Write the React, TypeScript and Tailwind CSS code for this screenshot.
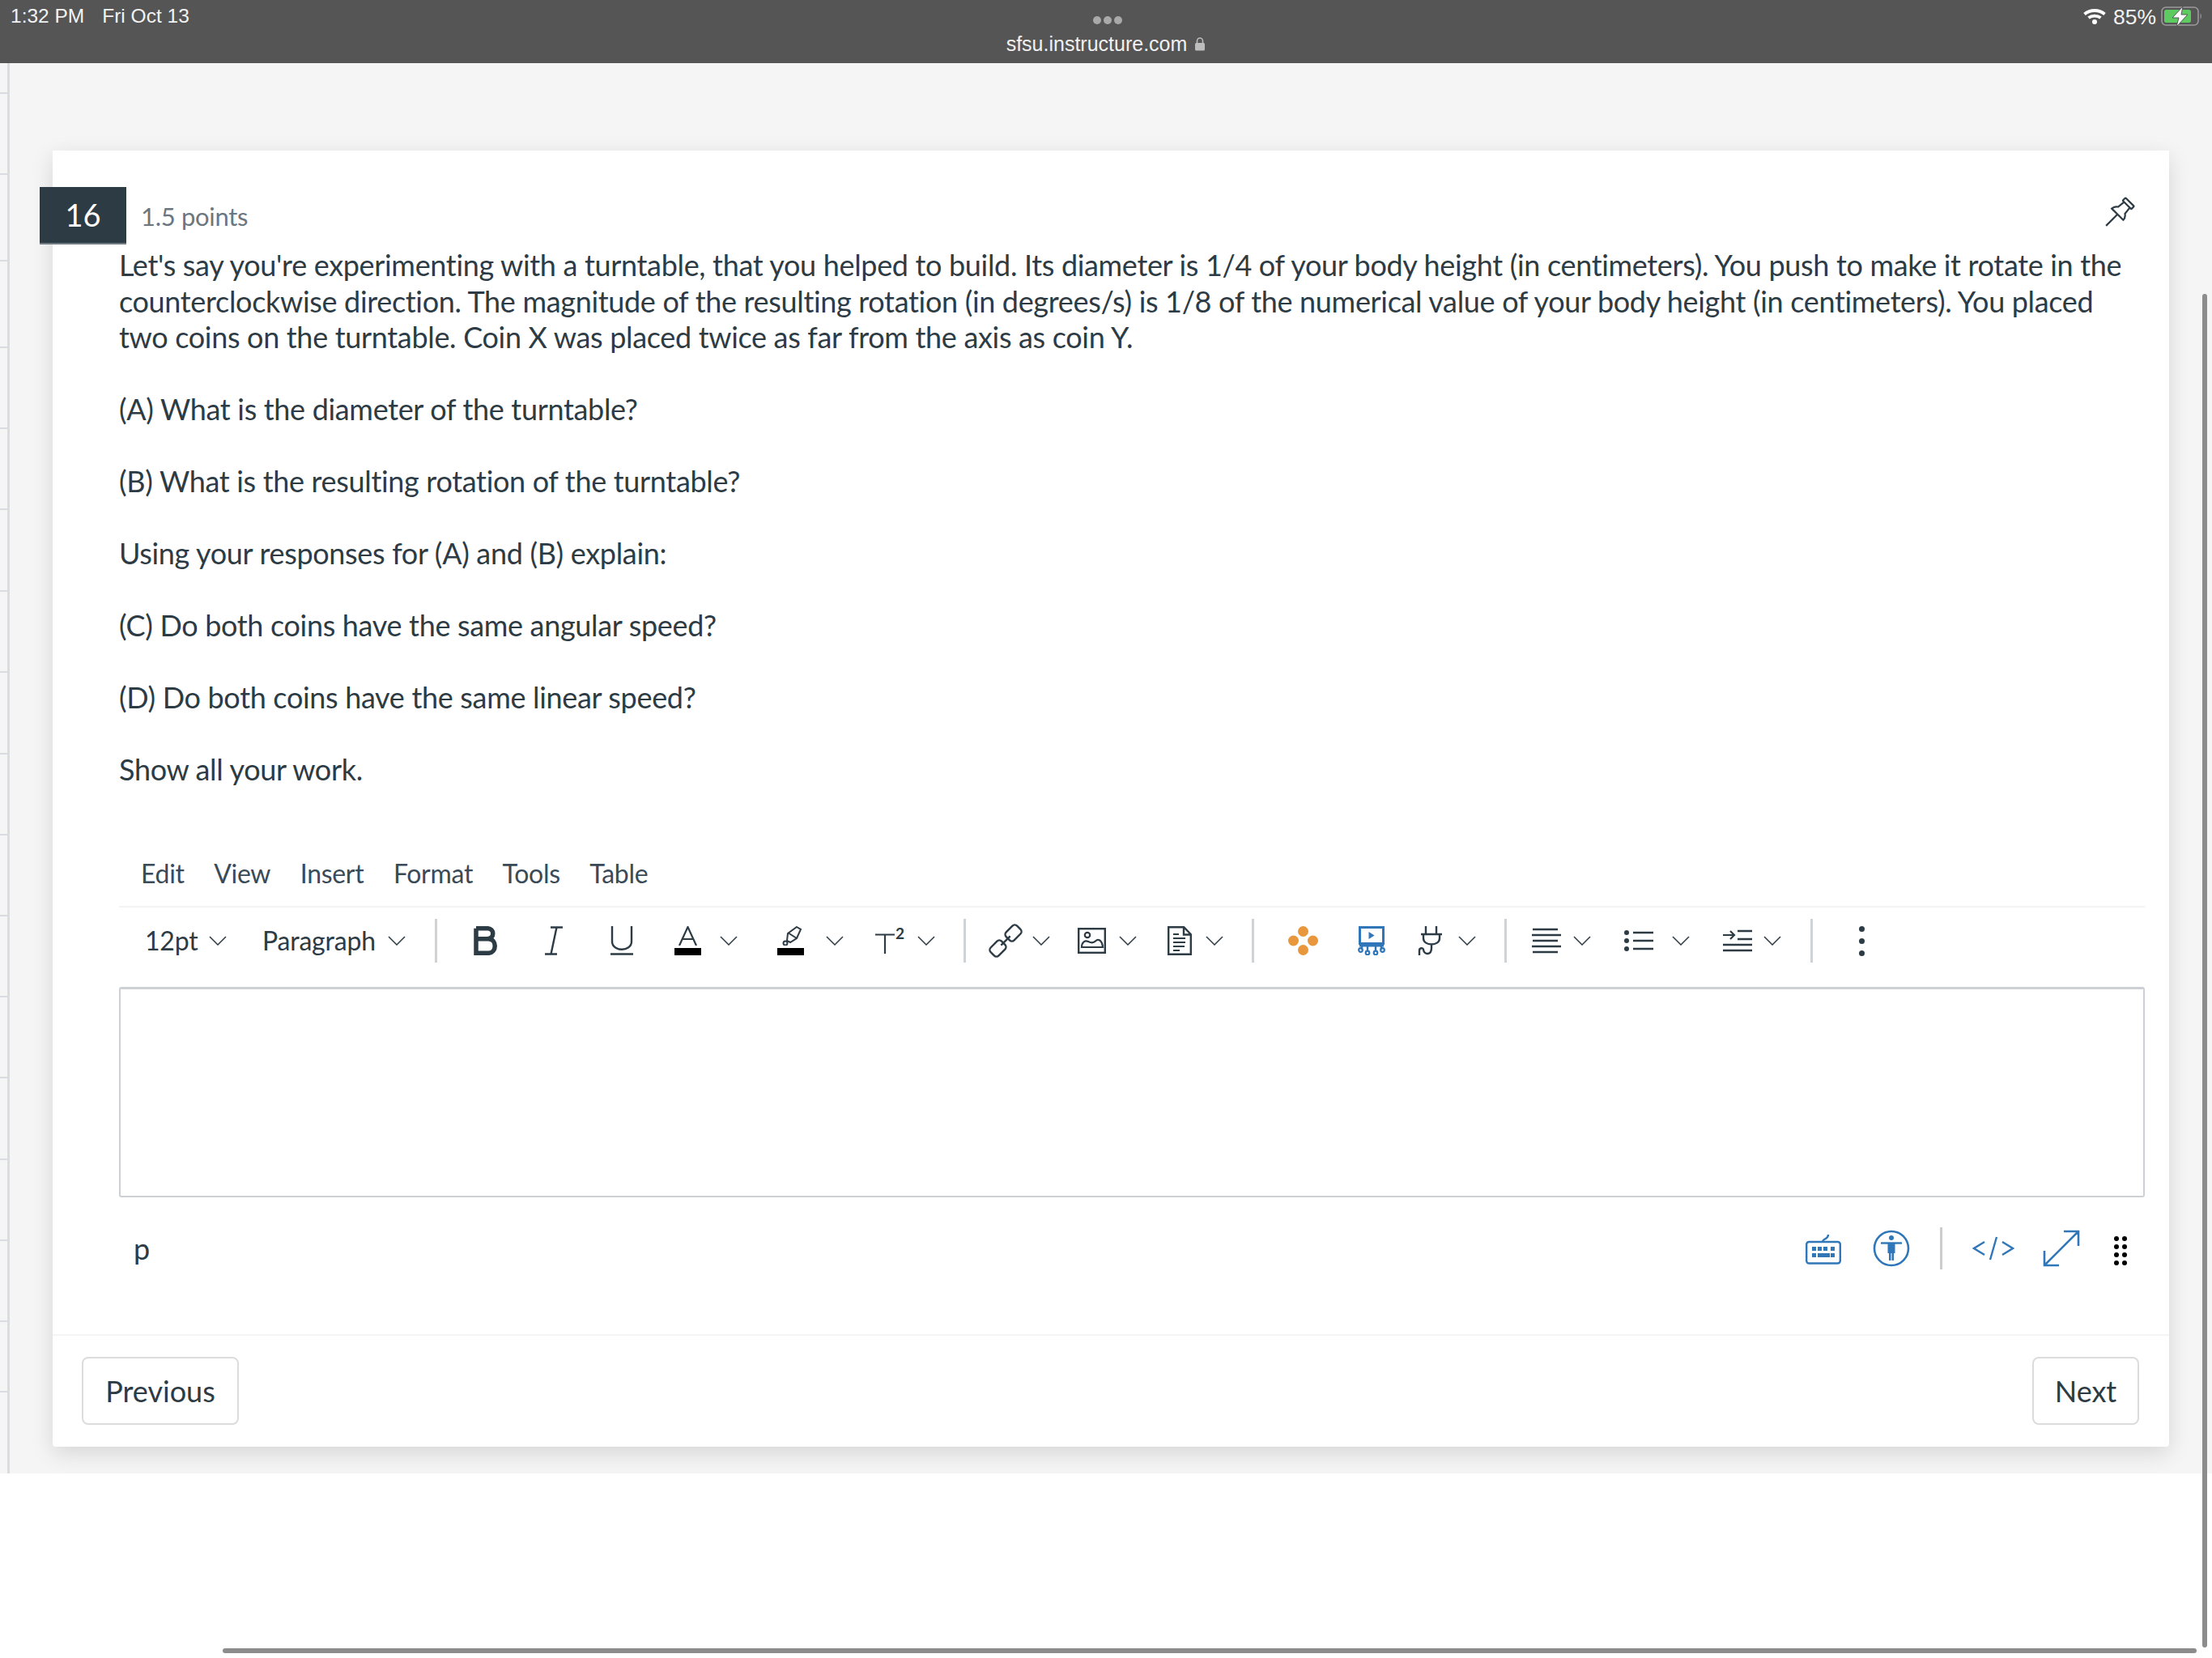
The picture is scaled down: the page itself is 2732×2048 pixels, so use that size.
const ticks = [38, 100, 107, 107, 100, 100, 101, 100, 101, 100, 100, 100, 100, 101, 100, 100, 87];

const Chevron = ({ className = '' }: { className?: string }) => (
  <svg viewBox="0 0 22 12" fill="none" stroke="#2d3b45" strokeWidth="1.5" className={`w-[22px] h-[12px] shrink-0 ${className}`}>
    <path d="M1 1l10 10L21 1" />
  </svg>
);

const Sep = ({ className = '' }: { className?: string }) => (
  <div className={`w-[3px] h-[54px] bg-[#cfd3d6] shrink-0 ${className}`} />
);

const paragraphs = [
  '(A) What is the diameter of the turntable?',
  '(B) What is the resulting rotation of the turntable?',
  'Using your responses for (A) and (B) explain:',
  '(C) Do both coins have the same angular speed?',
  '(D) Do both coins have the same linear speed?',
  'Show all your work.',
];

export default function App() {
  return (
    <div className="relative w-[2732px] h-[2048px] overflow-hidden bg-white text-[#2d3b45] font-['Lato','Liberation_Sans',sans-serif]">
      {/* ios status bar */}
      <div className="relative h-[78px] bg-[#555555] text-[#f2f2f2] font-['Liberation_Sans',sans-serif] flex justify-between">
        <div className="flex gap-[22px] pl-[13px] pt-[5px] text-[24.5px] leading-[30px]">
          <span>1:32 PM</span>
          <span>Fri Oct 13</span>
        </div>
        <div className="absolute left-0 right-0 top-[20px] flex flex-col items-center">
          <div className="flex gap-[3px] pl-[3px]">
            <span className="w-[10px] h-[10px] rounded-full bg-[#a9a9a9]" />
            <span className="w-[10px] h-[10px] rounded-full bg-[#a9a9a9]" />
            <span className="w-[10px] h-[10px] rounded-full bg-[#a9a9a9]" />
          </div>
          <div className="flex items-center gap-[9px] mt-[9px] text-[25px] leading-[30px] text-[#f0f0f0]">
            <span>sfsu.instructure.com</span>
            <svg viewBox="0 0 14 18" className="w-[14px] h-[19px]">
              <path d="M3.5 8V5a3.5 3.5 0 017 0v3" fill="none" stroke="#bdbdbd" strokeWidth="1.6" />
              <rect x="1" y="7.5" width="12" height="9.5" rx="1.5" fill="#bdbdbd" />
            </svg>
          </div>
        </div>
        <div className="flex items-start pt-[8px] pr-[11px]">
          <svg viewBox="0 0 28 20" className="w-[28px] h-[20px] mt-[2px]" fill="none" stroke="#fff" strokeWidth="3.8">
            <path d="M1.5 7.5c7-6 18-6 25 0" />
            <path d="M6.5 12c4-3.2 11-3.2 15 0" />
            <circle cx="14" cy="17" r="3" fill="#fff" stroke="none" />
          </svg>
          <span className="ml-[9px] text-[26.5px] leading-[30px] -mt-[2px]">85%</span>
          <svg viewBox="0 0 52 26" className="w-[52px] h-[26px] ml-[6px]">
            <rect x="1" y="1" width="45" height="22" rx="5" fill="none" stroke="#9a9a9a" strokeWidth="1.6" />
            <rect x="4" y="4" width="33" height="16" rx="2.500" fill="#5ecb61" />
            <path d="M48.500 8.500c2 1 2 6 0 7z" fill="#8f8f8f" />
            <path d="M27 0L14 14h8l-3 11 14-15h-8z" fill="#fff" stroke="#555555" strokeWidth="1" />
          </svg>
        </div>
      </div>

      {/* page area */}
      <div className="relative h-[1742px] bg-[#f5f5f5] flex">
        <div className="w-[12px] border-r-[3px] border-[#d9dde1] shrink-0">
          {ticks.map((h, i) => (
            <div key={i} style={{ height: h }} className="border-b-[2px] border-[#d9dde1]" />
          ))}
        </div>

        <div className="relative w-[2614px] h-[1601px] ml-[53px] mt-[108px] bg-white rounded-b-[4px] shadow-[0_8px_28px_rgba(0,0,0,0.13)] flex flex-col">
          <div className="absolute left-[-16px] top-[45px] w-[107px] h-[71px] bg-[#2d3b45] border-b-[2px] border-[#6f7a82] text-white text-[38px] leading-[69px] text-center">
            16
          </div>

          <div className="flex justify-between pl-[109px] pr-[46px] pt-[56px] h-[119px]">
            <span className="text-[31px] tracking-[-0.3px] leading-[50px] text-[#6b7780]">1.5 points</span>
            <svg viewBox="0 0 34 34" fill="none" stroke="#2d3b45" strokeWidth="2.2" className="w-[34px] h-[34px] mt-[5px] overflow-visible">
              <g transform="rotate(45 17 17)">
                <rect x="9.500" y="-3.500" width="15" height="5" rx="1" />
                <path d="M12 2l-1 9c-3 2-4 4-4 7h20c0-3-1-5-4-7l-1-9" />
                <path d="M17 18v20" />
              </g>
            </svg>
          </div>

          <div className="pl-[82px] pr-[30px] text-[36px] tracking-[-0.33px] leading-[44.5px] text-[#2d3b45]">
            <p>
              Let's say you're experimenting with a turntable, that you helped to build. Its diameter is 1/4 of your body height (in centimeters). You push to make it rotate in the counterclockwise direction. The magnitude of the resulting rotation (in degrees/s) is 1/8 of the numerical value of your body height (in centimeters). You placed two coins on the turntable. Coin X was placed twice as far from the axis as coin Y.
            </p>
            {paragraphs.map((t) => (
              <p key={t} className="mt-[44.5px]">{t}</p>
            ))}
          </div>

          {/* editor */}
          <div className="ml-[82px] mr-[30px] mt-[82px]">
            <div className="flex gap-[36.5px] pl-[27px] h-[66px] pb-[16px] items-center text-[32px] tracking-[-0.3px] text-[#394b58] border-b-[2px] border-[#f2f3f4]">
              <span>Edit</span>
              <span>View</span>
              <span>Insert</span>
              <span>Format</span>
              <span>Tools</span>
              <span>Table</span>
            </div>

            <div className="flex items-center h-[98px] pb-[15px] text-[32px] tracking-[-0.2px] text-[#2d3b45]">
              <span className="ml-[32px] w-[64px] shrink-0">12pt</span>
              <Chevron className="ml-[15px]" />
              <span className="ml-[44px] w-[139px] shrink-0">Paragraph</span>
              <Chevron className="ml-[16px]" />
              <Sep className="ml-[36px]" />

              <svg viewBox="0 0 30 36" className="w-[30px] h-[36px] ml-[45px] shrink-0" fill="none" stroke="#2d3b45" strokeWidth="5.500">
                <path d="M3 2.700h14c9 0 9 13 0 13H3M3 15.700h15c11 0 11 17.600 0 17.600H3V2.700" />
              </svg>
              <svg viewBox="0 0 26 36" className="w-[26px] h-[36px] ml-[56px] shrink-0" fill="none" stroke="#2d3b45" strokeWidth="2.400">
                <path d="M9 1.500h15M2 34.500h15M16.500 1.500l-7 33" />
              </svg>
              <svg viewBox="0 0 30 36" className="w-[30px] h-[36px] ml-[56px] shrink-0" fill="none" stroke="#2d3b45" strokeWidth="2.400">
                <path d="M3 0v19c0 13 24 13 24 0V0M1 34.500h28" />
              </svg>
              <div className="ml-[50px] w-[33px] h-[36px] shrink-0 flex flex-col">
                <svg viewBox="0 0 33 24" className="w-[33px] h-[24px] shrink-0" fill="none" stroke="#2d3b45" strokeWidth="2.200">
                  <path d="M6 24L16.500 1 27 24M10 16h13" />
                </svg>
                <div className="mt-[3px] h-[9px] bg-black" />
              </div>
              <Chevron className="ml-[23px]" />
              <div className="ml-[49px] w-[33px] h-[36px] shrink-0 flex flex-col">
                <svg viewBox="0 0 33 24" className="w-[33px] h-[24px] shrink-0" fill="none" stroke="#2d3b45" strokeWidth="2">
                  <path d="M24 1l5 3-5 11-8 5-4-2 1-9zM13 8l11 7" />
                  <circle cx="10" cy="21" r="2.500" />
                </svg>
                <div className="mt-[3px] h-[9px] bg-black" />
              </div>
              <Chevron className="ml-[27px]" />
              <div className="ml-[39px] w-[38px] h-[36px] shrink-0 relative">
                <svg viewBox="0 0 24 25" className="absolute left-0 top-[9px] w-[24px] h-[25px]" fill="none" stroke="#2d3b45" strokeWidth="2.200">
                  <path d="M0 1.500h24M12 1.500V25" />
                </svg>
                <span className="absolute left-[25px] top-[-1px] text-[19px] tracking-normal leading-[20px] font-bold">2</span>
              </div>
              <Chevron className="ml-[14px]" />
              <Sep className="ml-[35px]" />

              {/* link */}
              <svg viewBox="0 0 36 36" className="w-[36px] h-[36px] ml-[31px] shrink-0 overflow-visible" fill="none" stroke="#2d3b45" strokeWidth="2.400">
                <g transform="rotate(-45 18 18)">
                  <rect x="-5" y="11" width="19" height="14" rx="4" />
                  <rect x="22" y="11" width="19" height="14" rx="4" />
                  <path d="M10 18h16" />
                </g>
              </svg>
              <Chevron className="ml-[15px]" />
              {/* image */}
              <svg viewBox="0 0 35 32" className="w-[35px] h-[32px] ml-[34px] shrink-0" fill="none" stroke="#2d3b45" strokeWidth="2.200">
                <rect x="1.200" y="1.200" width="32.600" height="29.600" strokeWidth="2.400" />
                <circle cx="12" cy="9" r="3.200" />
                <path d="M5 24c0-6 4-9 8-7 3 1.500 6 2.500 9-.5 3-3 8-2 9 7.500z" />
              </svg>
              <Chevron className="ml-[16px]" />
              {/* document */}
              <svg viewBox="0 0 30 36" className="w-[30px] h-[36px] ml-[38px] shrink-0" fill="none" stroke="#2d3b45" strokeWidth="2.400">
                <path d="M1.200 1.200h19l8.600 9v24.600H1.200zM20 1.500v9h9" />
                <path d="M7 10h7M7 15h15M7 20h15M7 25h14M7 30h8" strokeWidth="1.800" />
              </svg>
              <Chevron className="ml-[17px]" />
              <Sep className="ml-[35px]" />

              <svg viewBox="0 0 37 36" className="w-[37px] h-[36px] ml-[42px] shrink-0" fill="#e8973c">
                <circle cx="18.500" cy="6.500" r="6.500" />
                <circle cx="6.500" cy="18" r="6.500" />
                <circle cx="30.500" cy="18" r="6.500" />
                <circle cx="18.500" cy="29.500" r="6.500" />
              </svg>
              <svg viewBox="0 0 34 36" className="w-[34px] h-[36px] ml-[49px] shrink-0" fill="none" stroke="#2f77b8" strokeWidth="3">
                <rect x="2.500" y="1.500" width="29" height="20" />
                <path d="M2 24h30" />
                <path d="M13.500 7l7 4.500-7 4.500z" fill="#2f77b8" stroke="none" />
                <path d="M5 25v4M29 25v4M12 25v6M22 25v6" strokeWidth="2.400" />
                <circle cx="3.500" cy="29.500" r="2.300" strokeWidth="2.200" />
                <circle cx="30.500" cy="29.500" r="2.300" strokeWidth="2.200" />
                <circle cx="12" cy="33" r="2.300" strokeWidth="2.200" />
                <circle cx="22" cy="33" r="2.300" strokeWidth="2.200" />
              </svg>
              <svg viewBox="0 0 33 36" className="w-[33px] h-[36px] ml-[40px] shrink-0" fill="none" stroke="#2d3b45" strokeWidth="2.400">
                <path d="M10 0v9M23 0v9M4 10h26M7 10v5c0 10 20 10 20 0v-5M17 22v5c0 9-9 9-10 2-.5-3-5-2-5 1v6" />
              </svg>
              <Chevron className="ml-[17px]" />
              <Sep className="ml-[35px]" />

              <svg viewBox="0 0 36 32" className="w-[36px] h-[32px] ml-[31px] shrink-0" fill="none" stroke="#2d3b45" strokeWidth="2.600">
                <path d="M1 2h31M0 9h36M1 16h31M0 23h36M1 30h31" />
              </svg>
              <Chevron className="ml-[15px]" />
              <svg viewBox="0 0 36 26" className="w-[36px] h-[26px] ml-[41px] shrink-0" fill="none" stroke="#2d3b45" strokeWidth="2.400">
                <circle cx="3" cy="3" r="3" fill="#2d3b45" stroke="none" />
                <circle cx="3" cy="13" r="3" fill="#2d3b45" stroke="none" />
                <circle cx="3" cy="23" r="3" fill="#2d3b45" stroke="none" />
                <path d="M11 3h25M11 13h25M11 23h25" />
              </svg>
              <Chevron className="ml-[23px]" />
              <svg viewBox="0 0 36 28" className="w-[36px] h-[28px] ml-[41px] shrink-0" fill="none" stroke="#2d3b45" strokeWidth="2.200">
                <path d="M0 7h13M9 2l5 5-5 5" />
                <path d="M18 2h18M18 12h18M0 19h36M0 26h36" strokeWidth="2.600" />
              </svg>
              <Chevron className="ml-[14px]" />
              <Sep className="ml-[36px]" />
              <div className="ml-[57px] flex flex-col gap-[8px]">
                <span className="w-[7px] h-[7px] rounded-full bg-[#2d3b45]" />
                <span className="w-[7px] h-[7px] rounded-full bg-[#2d3b45]" />
                <span className="w-[7px] h-[7px] rounded-full bg-[#2d3b45]" />
              </div>
            </div>

            <div className="h-[260px] rounded-[3px] border-t-[3px] border-l-[2px] border-r-[2px] border-b-[2px] border-[#cdd1d5] bg-white" />

            <div className="flex items-center h-[126px]">
              <span className="ml-[18px] text-[36px] text-[#2d3b45]">p</span>
              <div className="ml-auto flex items-center pr-[22px]">
                <svg viewBox="0 0 44 40" className="w-[44px] h-[40px]" fill="none" stroke="#2f77b8" strokeWidth="2.400">
                  <rect x="1.200" y="12" width="41.600" height="26.500" rx="3" />
                  <path d="M21 12c0-4 7-3 7-9" />
                  <g fill="#2f77b8" stroke="none">
                    <rect x="8" y="18" width="5" height="5" />
                    <rect x="15" y="18" width="5" height="5" />
                    <rect x="22" y="18" width="5" height="5" />
                    <rect x="31" y="18" width="5" height="5" />
                    <rect x="8" y="26" width="5" height="5" />
                    <rect x="15" y="26" width="15" height="5" />
                    <rect x="31" y="26" width="5" height="5" />
                  </g>
                </svg>
                <svg viewBox="0 0 46 46" className="w-[46px] h-[46px] ml-[39px]" fill="none" stroke="#2f77b8" strokeWidth="2.600">
                  <circle cx="23" cy="23" r="21" />
                  <path d="M10 16.500h26" strokeWidth="2.400" />
                  <circle cx="23" cy="10" r="3" fill="#2f77b8" stroke="none" />
                  <path d="M18.500 16h9v13h-1.500v9h-2.500v-9h-1v9h-2.500v-9h-1.500z" fill="#2f77b8" stroke="none" />
                </svg>
                <div className="w-[3px] h-[52px] bg-[#cccccc] ml-[37px]" />
                <svg viewBox="0 0 52 30" className="w-[52px] h-[30px] ml-[37px]" fill="none" stroke="#2f77b8" strokeWidth="2.400">
                  <path d="M15 7L2 15l13 8M37 7l13 8-13 8M30 1l-8 28" />
                </svg>
                <svg viewBox="0 0 46 46" className="w-[46px] h-[46px] ml-[35px]" fill="none" stroke="#2f77b8" strokeWidth="2.600">
                  <path d="M2 44L44 2M26 2h18v18M2 26v18h18" />
                </svg>
                <div className="grid grid-cols-2 gap-x-[4px] gap-y-[4px] ml-[42px] mt-[6px]">
                  {[0, 1, 2, 3, 4, 5, 6, 7].map((i) => (
                    <span key={i} className="w-[6px] h-[6px] rounded-full bg-black" />
                  ))}
                </div>
              </div>
            </div>
          </div>

          {/* prev/next */}
          <div className="mt-auto h-[139px] border-t-[2px] border-[#f5f5f5] flex justify-between items-start pt-[26px] pl-[36px] pr-[37px]">
            <button className="w-[194px] h-[84px] rounded-[8px] border-[2px] border-[#dcdcdc] bg-white text-[36px] text-[#2d3b45]">Previous</button>
            <button className="w-[132px] h-[84px] rounded-[8px] border-[2px] border-[#dcdcdc] bg-white text-[36px] text-[#2d3b45]">Next</button>
          </div>
        </div>
      </div>

      {/* scrollbars */}
      <div className="absolute left-[2720px] top-[363px] w-[6px] h-[1672px] rounded-[3px] bg-[#8c8c8c]" />
      <div className="absolute left-[275px] top-[2036px] w-[2438px] h-[6px] rounded-[3px] bg-[#8c8c8c]" />
    </div>
  );
}
